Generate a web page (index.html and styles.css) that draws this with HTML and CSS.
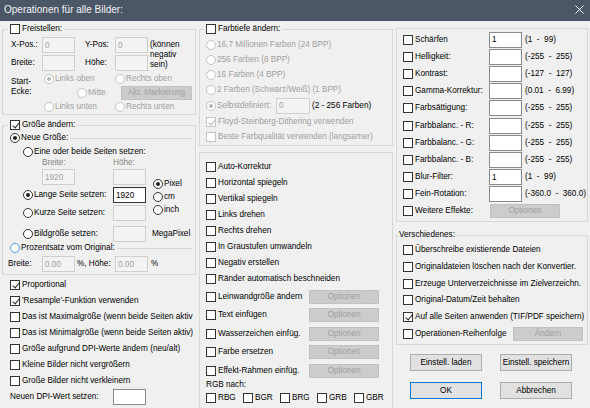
FILE: index.html
```html
<!DOCTYPE html>
<html lang="de">
<head>
    <meta charset="UTF-8">
    <title>Operationen für alle Bilder</title>
    <link rel="stylesheet" href="styles.css">
</head>
<body>
    <div class="titlebar">
        <span class="title">Operationen für alle Bilder:</span>
        <svg class="close" width="9" height="9" viewBox="0 0 9 9">
            <path d="M0.5 0.5 L8.5 8.5 M8.5 0.5 L0.5 8.5" stroke="#ffffff" stroke-width="1" fill="none"/>
        </svg>
    </div>

    <div class="dialog">
        <!-- left column -->
        <div class="col">
            <fieldset class="group g-crop">
                <legend><label class="chk"><input type="checkbox">Freistellen:</label></legend>
                <div class="inner">
                    <div class="pos-grid">
                        <span class="pl">X-Pos.:</span>
                        <input type="text" class="field" value="0" disabled>
                        <span>Y-Pos:</span>
                        <input type="text" class="field" value="0" disabled>
                        <span class="note">(können<br>negativ<br>sein)</span>
                        <span class="pl">Breite:</span>
                        <input type="text" class="field" disabled>
                        <span>Höhe:</span>
                        <input type="text" class="field" disabled>
                    </div>
                    <div class="corner">
                        <div class="corner-lbl">Start-<br>Ecke:</div>
                        <div class="corner-opts">
                            <div class="crow">
                                <label class="opt off w71"><input type="radio" name="corner" checked disabled>Links oben</label>
                                <label class="opt off"><input type="radio" name="corner" disabled>Rechts oben</label>
                            </div>
                            <div class="crow">
                                <label class="opt off mitte"><input type="radio" name="corner" disabled>Mitte</label>
                                <button class="btn btn-mark" disabled>Akt. Markierung</button>
                            </div>
                            <div class="crow">
                                <label class="opt off w71"><input type="radio" name="corner" disabled>Links unten</label>
                                <label class="opt off"><input type="radio" name="corner" disabled>Rechts unten</label>
                            </div>
                        </div>
                    </div>
                </div>
            </fieldset>

            <fieldset class="group g-size">
                <legend><label class="chk"><input type="checkbox" checked>Größe ändern:</label></legend>
                <div class="inner">
                    <fieldset class="sub s-new">
                        <legend><label class="opt"><input type="radio" name="size" checked>Neue Größe:</label></legend>
                        <div class="row r-eine"><label class="opt"><input type="radio" name="mode">Eine oder beide Seiten setzen:</label></div>
                        <div class="row r-head dim"><span class="c-first">Breite:</span><span>Höhe:</span></div>
                        <div class="size-block">
                            <div class="size-rows">
                                <div class="row r-a"><span class="c-first"><input type="text" class="field" value="1920" disabled></span><input type="text" class="field" disabled></div>
                                <div class="row r-b"><label class="opt c-mode"><input type="radio" name="mode" checked>Lange Seite setzen:</label><input type="text" class="field focus" value="1920"></div>
                                <div class="row r-c"><label class="opt c-mode"><input type="radio" name="mode">Kurze Seite setzen:</label><input type="text" class="field" disabled></div>
                            </div>
                            <div class="units">
                                <label class="opt"><input type="radio" name="unit" checked>Pixel</label>
                                <label class="opt"><input type="radio" name="unit">cm</label>
                                <label class="opt"><input type="radio" name="unit">inch</label>
                            </div>
                        </div>
                        <div class="row r-mp"><label class="opt c-mode"><input type="radio" name="mode">Bildgröße setzen:</label><input type="text" class="field" disabled><span class="mp">MegaPixel</span></div>
                    </fieldset>
                    <fieldset class="sub s-pct">
                        <legend><label class="opt"><input type="radio" name="size" class="hover">Prozentsatz vom Original:</label></legend>
                        <div class="row r-pct">
                            <span class="c-b">Breite:</span>
                            <input type="text" class="field" value="0.00" disabled>
                            <span class="c-h">%, Höhe:</span>
                            <input type="text" class="field" value="0.00" disabled>
                            <span class="c-p">%</span>
                        </div>
                    </fieldset>
                </div>
            </fieldset>

            <div class="opts-list">
                <label class="chk"><input type="checkbox" checked>Proportional</label>
                <label class="chk"><input type="checkbox" checked>'Resample'-Funktion verwenden</label>
                <label class="chk"><input type="checkbox">Das ist Maximalgröße (wenn beide Seiten aktiv</label>
                <label class="chk"><input type="checkbox">Das ist Minimalgröße (wenn beide Seiten aktiv)</label>
                <label class="chk"><input type="checkbox">Größe aufgrund DPI-Werte ändern (neu/alt)</label>
                <label class="chk"><input type="checkbox">Kleine Bilder nicht vergrößern</label>
                <label class="chk"><input type="checkbox">Große Bilder nicht verkleinern</label>
                <div class="row r-dpi"><span class="c-dpi">Neuen DPI-Wert setzen:</span><input type="text" class="field"></div>
            </div>
        </div>

        <!-- middle column -->
        <div class="col">
            <fieldset class="group g-depth">
                <legend><label class="chk"><input type="checkbox">Farbtiefe ändern:</label></legend>
                <div class="inner">
                    <label class="opt off h15"><input type="radio" name="depth" disabled>16,7 Millionen Farben (24 BPP)</label>
                    <label class="opt off h15"><input type="radio" name="depth" disabled>256 Farben (8 BPP)</label>
                    <label class="opt off h15"><input type="radio" name="depth" disabled>16 Farben (4 BPP)</label>
                    <label class="opt off h15"><input type="radio" name="depth" disabled>2 Farben (Schwarz/Weiß) (1 BPP)</label>
                    <div class="row h17">
                        <label class="opt off c-self"><input type="radio" name="depth" checked disabled>Selbstdefiniert:</label>
                        <input type="text" class="field w34" value="0" disabled>
                        <span class="colors">(2 - 256 Farben)</span>
                    </div>
                    <label class="chk off h15"><input type="checkbox" checked disabled>Floyd-Steinberg-Dithering verwenden</label>
                    <label class="chk off h15"><input type="checkbox" disabled>Beste Farbqualität verwenden (langsamer)</label>
                </div>
            </fieldset>

            <fieldset class="group g-tools">
                <div class="inner">
                    <label class="chk h16"><input type="checkbox">Auto-Korrektur</label>
                    <label class="chk h16"><input type="checkbox">Horizontal spiegeln</label>
                    <label class="chk h16"><input type="checkbox">Vertikal spiegeln</label>
                    <label class="chk h16"><input type="checkbox">Links drehen</label>
                    <label class="chk h16"><input type="checkbox">Rechts drehen</label>
                    <label class="chk h16"><input type="checkbox">In Graustufen umwandeln</label>
                    <label class="chk h16"><input type="checkbox">Negativ erstellen</label>
                    <label class="chk h16"><input type="checkbox">Ränder automatisch beschneiden</label>
                    <div class="row h19"><label class="chk c-tool"><input type="checkbox">Leinwandgröße ändern</label><button class="btn" disabled>Optionen</button></div>
                    <div class="row h18"><label class="chk c-tool"><input type="checkbox">Text einfügen</label><button class="btn" disabled>Optionen</button></div>
                    <div class="row h19"><label class="chk c-tool"><input type="checkbox">Wasserzeichen einfüg.</label><button class="btn" disabled>Optionen</button></div>
                    <div class="row h18"><label class="chk c-tool"><input type="checkbox">Farbe ersetzen</label><button class="btn" disabled>Optionen</button></div>
                    <div class="row h19"><label class="chk c-tool"><input type="checkbox">Effekt-Rahmen einfüg.</label><button class="btn" disabled>Optionen</button></div>
                    <div class="rgb-title">RGB nach:</div>
                    <div class="rgb-row">
                        <label class="chk"><input type="checkbox">RBG</label>
                        <label class="chk"><input type="checkbox">BGR</label>
                        <label class="chk"><input type="checkbox">BRG</label>
                        <label class="chk"><input type="checkbox">GRB</label>
                        <label class="chk"><input type="checkbox">GBR</label>
                    </div>
                </div>
            </fieldset>
        </div>

        <!-- right column -->
        <div class="col">
            <fieldset class="group g-filter">
                <div class="inner">
                    <div class="frow"><label class="chk c-filter"><input type="checkbox">Schärfen</label><input type="text" class="field" value="1"><span class="rng">(1&nbsp; -&nbsp; 99)</span></div>
                    <div class="frow"><label class="chk c-filter"><input type="checkbox">Helligkeit:</label><input type="text" class="field"><span class="rng">(-255&nbsp; -&nbsp; 255)</span></div>
                    <div class="frow"><label class="chk c-filter"><input type="checkbox">Kontrast:</label><input type="text" class="field"><span class="rng">(-127&nbsp; -&nbsp; 127)</span></div>
                    <div class="frow"><label class="chk c-filter"><input type="checkbox">Gamma-Korrektur:</label><input type="text" class="field"><span class="rng">(0.01&nbsp; -&nbsp; 6.99)</span></div>
                    <div class="frow"><label class="chk c-filter"><input type="checkbox">Farbsättigung:</label><input type="text" class="field"><span class="rng">(-255&nbsp; -&nbsp; 255)</span></div>
                    <div class="frow"><label class="chk c-filter"><input type="checkbox">Farbbalanc. - R:</label><input type="text" class="field"><span class="rng">(-255&nbsp; -&nbsp; 255)</span></div>
                    <div class="frow"><label class="chk c-filter"><input type="checkbox">Farbbalanc. - G:</label><input type="text" class="field"><span class="rng">(-255&nbsp; -&nbsp; 255)</span></div>
                    <div class="frow"><label class="chk c-filter"><input type="checkbox">Farbbalanc. - B:</label><input type="text" class="field"><span class="rng">(-255&nbsp; -&nbsp; 255)</span></div>
                    <div class="frow"><label class="chk c-filter"><input type="checkbox">Blur-Filter:</label><input type="text" class="field" value="1"><span class="rng">(1&nbsp; -&nbsp; 99)</span></div>
                    <div class="frow"><label class="chk c-filter"><input type="checkbox">Fein-Rotation:</label><input type="text" class="field"><span class="rng">(-360.0&nbsp; -&nbsp; 360.0)</span></div>
                    <div class="frow"><label class="chk c-filter"><input type="checkbox">Weitere Effekte:</label><button class="btn btn-more" disabled>Optionen</button></div>
                </div>
            </fieldset>

            <fieldset class="group g-misc">
                <legend>Verschiedenes:</legend>
                <div class="inner">
                    <label class="chk mrow"><input type="checkbox">Überschreibe existierende Dateien</label>
                    <label class="chk mrow"><input type="checkbox">Originaldateien löschen nach der Konvertier.</label>
                    <label class="chk mrow"><input type="checkbox">Erzeuge Unterverzeichnisse im Zielverzeichn.</label>
                    <label class="chk mrow"><input type="checkbox">Original-Datum/Zeit behalten</label>
                    <label class="chk mrow"><input type="checkbox" checked>Auf alle Seiten anwenden (TIF/PDF speichern)</label>
                    <div class="row h17"><label class="chk c-misc"><input type="checkbox">Operationen-Reihenfolge</label><button class="btn" disabled>Ändern</button></div>
                </div>
            </fieldset>

            <div class="actions">
                <button class="btn-std">Einstell. laden</button>
                <button class="btn-std">Einstell. speichern</button>
                <button class="btn-std default">OK</button>
                <button class="btn-std">Abbrechen</button>
            </div>
        </div>
    </div>
</body>
</html>
```

FILE: styles.css
```css
* {
    margin: 0;
    padding: 0;
    box-sizing: border-box;
}

body {
    width: 590px;
    height: 408px;
    overflow: hidden;
    background-color: #f0f0f0;
    font-family: "Liberation Sans", Arial, sans-serif;
    font-size: 8.2px;
    line-height: 10px;
    color: #000;
}

/* title bar */
.titlebar {
    height: 21px;
    background-color: #4b5666;
    color: #f2f3f5;
    display: flex;
    align-items: center;
    justify-content: space-between;
    padding: 0 6px 1px 4px;
}

.title {
    font-size: 10px;
}

.close {
    margin-bottom: 1px;
}

/* columns */
.dialog {
    display: grid;
    grid-template-columns: 194px 194px 192px;
    column-gap: 3px;
    padding-left: 2px;
    align-items: start;
}

.group {
    border: 1px solid #d8d8d8;
    min-width: 0;
}

.group > legend {
    margin-left: 5px;
    padding: 0 2px;
    line-height: 12px;
}

legend .chk,
legend .opt {
    height: 12px;
}

.sub {
    border: 0;
    border-top: 1px solid #d8d8d8;
    min-width: 0;
}

.sub > legend {
    padding: 0 2px;
}

.row {
    display: flex;
    align-items: center;
}

.chk, .opt {
    display: flex;
    align-items: center;
    white-space: nowrap;
}

.off {
    color: #a0a0a0;
}

.dim {
    color: #858585;
}

/* checkboxes and radios */
input[type="checkbox"],
input[type="radio"] {
    -webkit-appearance: none;
    appearance: none;
    flex: none;
    position: relative;
    width: 10px;
    height: 10px;
    border: 1px solid #333;
    background-color: #fff;
    margin-right: 2px;
}

input[type="radio"] {
    border-radius: 50%;
    margin-right: 1px;
}

input[type="checkbox"]:checked::after {
    content: "";
    position: absolute;
    left: 2.5px;
    top: 0;
    width: 3px;
    height: 6px;
    border: solid #222;
    border-width: 0 1px 1px 0;
    transform: rotate(40deg);
}

input[type="radio"]:checked::after {
    content: "";
    position: absolute;
    left: 2px;
    top: 2px;
    width: 4px;
    height: 4px;
    border-radius: 50%;
    background-color: #222;
}

input[type="checkbox"]:disabled,
input[type="radio"]:disabled {
    border-color: #c4c4c4;
}

input[type="checkbox"]:disabled::after {
    border-color: #b4b4b4;
}

input[type="radio"]:disabled::after {
    background-color: #b4b4b4;
}

input.hover {
    border-color: #4d9be0;
}

/* text fields */
.field {
    flex: none;
    width: 33px;
    height: 16px;
    border: 1px solid #8a8a8a;
    background-color: #fff;
    font: inherit;
    color: #000;
    padding: 0 2px;
}

.field:disabled {
    border-color: #cfcfcf;
    background-color: #f3f3f3;
    color: #a0a0a0;
}

.field.focus {
    border-color: #333;
}

.w34 {
    width: 34px;
}

/* buttons */
.btn {
    flex: none;
    width: 70px;
    height: 14px;
    font: inherit;
    line-height: 12px;
    background-color: #cccccc;
    border: 1px solid #c2c2c2;
    color: #a0a0a0;
}

.btn-std {
    height: 17px;
    font: inherit;
    background-color: #e1e1e1;
    border: 1px solid #adadad;
    color: #000;
}

.btn-std.default {
    border-color: #0078d7;
}

/* Freistellen */
.g-crop {
    margin-top: 2px;
}

.g-crop .inner {
    padding-left: 5px;
}

.pos-grid {
    display: grid;
    grid-template-columns: 34px 43px 30px 35px 1fr;
    grid-template-rows: 16px 16px;
    row-gap: 2px;
    align-items: center;
    margin-top: 2px;
}

.pl {
    padding-left: 3px;
}

.note {
    grid-column: 5;
    grid-row: 1 / span 2;
    align-self: start;
    margin-top: 3px;
}

.corner {
    display: flex;
    margin-top: 1px;
}

.corner-lbl {
    width: 36px;
    padding-left: 3px;
    margin-top: 5px;
}

.crow {
    display: flex;
    align-items: center;
    height: 14px;
}

.w71 {
    width: 71px;
}

.mitte {
    width: 77px;
    padding-left: 33px;
}

.btn-mark {
    width: 71px;
}

/* Größe ändern */
.g-size {
    margin-top: 4px;
}

.g-size > .inner {
    padding: 0 3px 2px 5px;
}

.s-new {
    margin-top: 1px;
}

.s-new .row {
    padding-left: 15px;
}

.r-eine {
    height: 12px;
    margin-top: 2px;
}

.r-head {
    height: 10px;
}

.c-first {
    width: 90px;
    padding-left: 19px;
}

.c-mode {
    width: 90px;
}

.size-block {
    display: flex;
}

.size-rows {
    width: 145px;
}

.r-a, .r-b {
    height: 18px;
}

.r-c {
    height: 17px;
}

.units {
    padding-top: 9px;
}

.units .opt {
    height: 13px;
}

.r-mp {
    height: 17px;
    margin-top: 4px;
}

.mp {
    margin-left: 6px;
}

.r-pct {
    height: 16px;
    margin-top: 2px;
}

.c-b {
    width: 34px;
}

.c-h {
    width: 38px;
    margin-left: 2px;
}

.c-p {
    margin-left: 3px;
}

/* left option list */
.opts-list {
    padding: 2px 0 0 8px;
}

.opts-list .chk,
.opts-list .row {
    height: 16px;
}

.c-dpi {
    width: 103px;
}

/* Farbtiefe */
.g-depth {
    margin-top: 2px;
}

.g-depth > legend {
    margin-left: 4px;
}

.g-depth .inner {
    padding: 2px 0 1px 6px;
}

.h15 { height: 15px; }
.h16 { height: 16px; }
.h17 { height: 17px; }
.h18 { height: 18px; }
.h19 { height: 19px; }

.c-self {
    width: 70px;
}

.colors {
    margin-left: 2px;
}

/* tools */
.g-tools {
    margin-top: 6px;
}

.g-tools .inner {
    padding: 6px 0 3px 6px;
}

.c-tool {
    width: 103px;
}

.rgb-title {
    height: 10px;
}

.rgb-row {
    display: flex;
    height: 15px;
    align-items: center;
}

.rgb-row .chk {
    width: 37px;
}

/* filters */
.g-filter {
    margin-top: 7px;
}

.g-filter .inner {
    padding: 2px 0 1px 6px;
}

.frow {
    display: flex;
    align-items: center;
    height: 17.2px;
}

.c-filter {
    width: 86px;
}

.rng {
    margin-left: 3px;
    white-space: nowrap;
}

.btn-more {
    margin-left: 1px;
}

/* Verschiedenes */
.g-misc {
    margin-top: 7px;
}

.g-misc > legend {
    margin-left: 1px;
    padding: 0 1px;
}

.g-misc .inner {
    padding: 1px 0 2px 6px;
}

.mrow {
    height: 16.6px;
}

.c-misc {
    width: 110px;
}

/* dialog buttons */
.actions {
    display: grid;
    grid-template-columns: 72px 72px;
    grid-auto-rows: 17px;
    column-gap: 18px;
    row-gap: 11px;
    padding-left: 14px;
    margin-top: 9px;
}
```
